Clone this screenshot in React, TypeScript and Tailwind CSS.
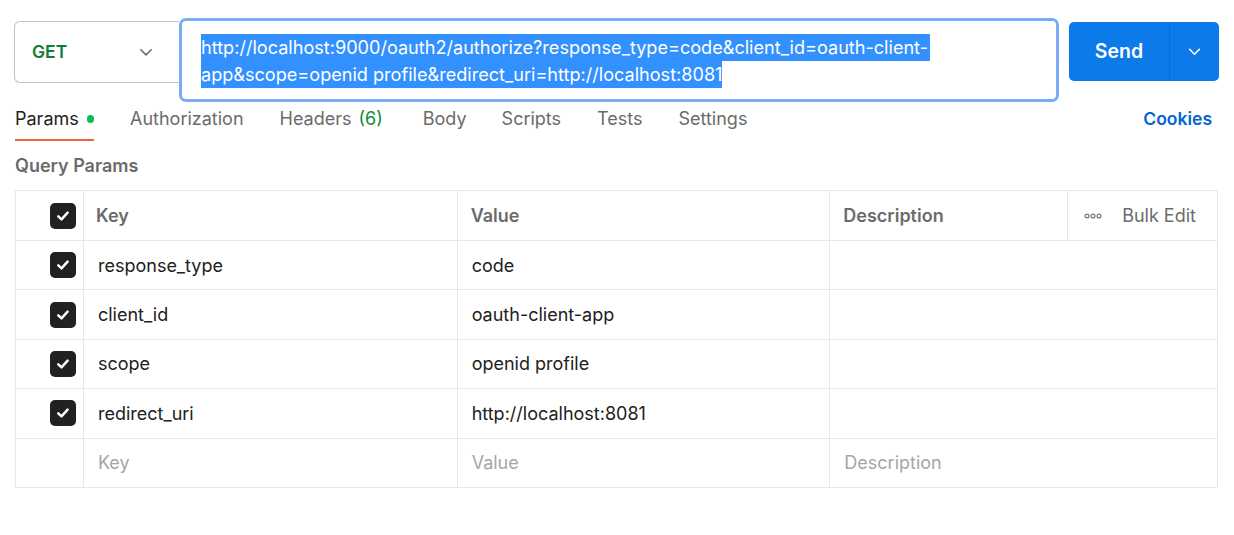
import React from "react";

const Check = () => (
  <div className="w-[26px] h-[26px] rounded-[5px] bg-[#212121] flex items-center justify-center">
    <svg width="16" height="16" viewBox="0 0 16 16" fill="none">
      <path d="M3.3 8.3 L6.5 11.3 L12.6 4.7" stroke="white" strokeWidth="2.5" strokeLinecap="round" strokeLinejoin="round" />
    </svg>
  </div>
);

const Chevron = ({ color, size = 14 }: { color: string; size?: number }) => (
  <svg width={size} height={size} viewBox="0 0 14 14" fill="none">
    <path d="M2.5 5 L7 9.5 L11.5 5" stroke={color} strokeWidth="1.4" strokeLinecap="round" strokeLinejoin="round" />
  </svg>
);

const rows = [
  ["response_type", "code"],
  ["client_id", "oauth-client-app"],
  ["scope", "openid profile"],
  ["redirect_uri", "http://localhost:8081"],
];

export default function App() {
  return (
    <div className="w-[1234px] h-[535px] bg-white text-[#212121] overflow-hidden" style={{ fontFamily: "Inter, 'Noto Sans', sans-serif" }}>
      <div className="flex items-start pl-[14px] pt-[18px]">
        <div className="mt-[3px] w-[165px] h-[62px] border border-r-0 border-[#c4c4c4] rounded-l-[6px] flex items-center justify-between pl-[17px] pr-[25px]">
          <span className="text-[17.5px] font-semibold text-[#0f7d38]">GET</span>
          <Chevron color="#6b6b6b" size={16} />
        </div>
        <div className="w-[880px] h-[84px] border-[3px] border-[#78adf3] rounded-[7px] pl-[19px] pt-[13px] text-[18.1px] leading-[27px] text-white">
          <div><span className="bg-[#3391ff] inline-block pr-[2px]">http://localhost:9000/oauth2/authorize?response_type=code&amp;client_id=oauth-client-</span></div>
          <div><span className="bg-[#3391ff] inline-block">app&amp;scope=openid profile&amp;redirect_uri=http://localhost:8081</span></div>
        </div>
        <div className="ml-[10px] mt-[4px] w-[150px] h-[59px] bg-[#0c7ae8] rounded-[5px] flex text-white">
          <div className="w-[101px] flex items-center justify-center text-[19.5px] font-semibold border-r border-[#0a6cd0]">Send</div>
          <div className="flex-1 flex items-center justify-center">
            <Chevron color="white" size={15} />
          </div>
        </div>
      </div>

      <div className="flex items-end justify-between px-[15px] h-[39px] pr-[22px]">
        <div className="flex h-full text-[18px] text-[#6b6b6b]">
          <div className="flex items-center h-full pb-[4px] border-b-2 border-[#f0643a] text-[#212121] w-[79px]">
            Params<span className="ml-[8px] w-[8px] h-[8px] rounded-full bg-[#0cbb52] inline-block" />
          </div>
          <div className="flex items-center ml-[36px] h-full pb-[4px] border-b-2 border-transparent">Authorization</div>
          <div className="flex items-center ml-[36px] h-full pb-[4px] border-b-2 border-transparent">Headers<span className="ml-[7px] text-[#0f8a3a]">(6)</span></div>
          <div className="flex items-center ml-[40px] h-full pb-[4px] border-b-2 border-transparent">Body</div>
          <div className="flex items-center ml-[35px] h-full pb-[4px] border-b-2 border-transparent">Scripts</div>
          <div className="flex items-center ml-[36px] h-full pb-[4px] border-b-2 border-transparent">Tests</div>
          <div className="flex items-center ml-[36px] h-full pb-[4px] border-b-2 border-transparent">Settings</div>
        </div>
        <div className="h-full flex items-center pb-[4px] text-[17.5px] font-semibold text-[#0265d2]">Cookies</div>
      </div>

      <div className="px-[15px] mt-[13px] text-[18px] font-semibold text-[#6b6b6b] leading-[24px]">Query Params</div>

      <div className="mx-[15px] mt-[12px] w-[1203px] border-t border-l border-[#e8e8e8] text-[18px]">
        <div className="flex h-[50px] border-b border-[#e8e8e8] font-semibold text-[#6b6b6b]">
          <div className="w-[68px] border-r border-[#e8e8e8] flex items-center justify-end pr-[7px]"><Check /></div>
          <div className="w-[374px] border-r border-[#e8e8e8] flex items-center pl-[12px]">Key</div>
          <div className="w-[373px] border-r border-[#e8e8e8] flex items-center pl-[13px]">Value</div>
          <div className="w-[238px] border-r border-[#e8e8e8] flex items-center pl-[13px]">Description</div>
          <div className="w-[150px] border-r border-[#e8e8e8] flex items-center pl-[16px] font-normal">
            <svg width="18" height="6" viewBox="0 0 18 6" fill="none">
              <circle cx="3" cy="3" r="1.9" stroke="#7a7a7a" strokeWidth="1.3" />
              <circle cx="9" cy="3" r="1.9" stroke="#7a7a7a" strokeWidth="1.3" />
              <circle cx="15" cy="3" r="1.9" stroke="#7a7a7a" strokeWidth="1.3" />
            </svg>
            <span className="ml-[20px]">Bulk Edit</span>
          </div>
        </div>
        {rows.map(([k, v]) => (
          <div key={k} className="flex h-[49.4px] border-b border-[#e8e8e8]">
            <div className="w-[68px] border-r border-[#e8e8e8] flex items-center justify-end pr-[7px]"><Check /></div>
            <div className="w-[374px] border-r border-[#e8e8e8] flex items-center pl-[14px]">{k}</div>
            <div className="w-[373px] border-r border-[#e8e8e8] flex items-center pl-[14px]">{v}</div>
            <div className="w-[388px] border-r border-[#e8e8e8]" />
          </div>
        ))}
        <div className="flex h-[49.4px] border-b border-[#e8e8e8] text-[#a6a6a6]">
          <div className="w-[68px] border-r border-[#e8e8e8]" />
          <div className="w-[374px] border-r border-[#e8e8e8] flex items-center pl-[14px]">Key</div>
          <div className="w-[373px] border-r border-[#e8e8e8] flex items-center pl-[14px]">Value</div>
          <div className="w-[388px] border-r border-[#e8e8e8] flex items-center pl-[14px]">Description</div>
        </div>
      </div>
    </div>
  );
}
